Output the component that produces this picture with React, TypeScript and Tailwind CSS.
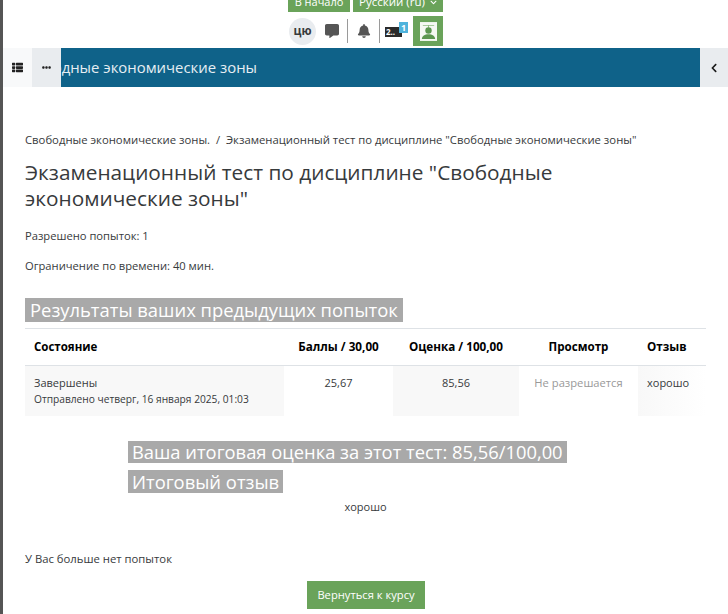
import { FaBell, FaCommentAlt, FaChevronLeft, FaChevronDown, FaThList, FaEllipsisH } from "react-icons/fa";

const font = { fontFamily: '"Open Sans", "Noto Sans", sans-serif' };

function Avatar() {
  return (
    <div className="flex h-[30px] w-[30px] items-center justify-center bg-[#6aa35a]">
      <svg viewBox="0 0 18 20" width="17" height="19">
        <rect width="18" height="20" fill="#f5f8f3" />
        <path d="M3 3h12v1H9.5v2h-1V4H3z" fill="#8fbb82" />
        <circle cx="9" cy="9" r="3.4" fill="#5c9650" />
        <path d="M2 18c0-3 3-5 7-5s7 2 7 5z" fill="#5c9650" />
      </svg>
    </div>
  );
}

function ResultsTable() {
  return (
    <div className="grid grid-cols-[259px_109px_126px_119px_68px] border-t border-[#dee2e6] text-[11px] text-[#373a3c]">
      <div className="flex h-[37px] items-center border-b border-[#dee2e6] pl-[9px] text-[11.5px] font-bold text-black">Состояние</div>
      <div className="flex h-[37px] items-center justify-center border-b border-[#dee2e6] text-[11.7px] font-bold text-black">Баллы / 30,00</div>
      <div className="flex h-[37px] items-center justify-center border-b border-[#dee2e6] text-[11.7px] font-bold text-black">Оценка / 100,00</div>
      <div className="flex h-[37px] items-center justify-center border-b border-[#dee2e6] text-[11.6px] font-bold text-black">Просмотр</div>
      <div className="flex h-[37px] items-center border-b border-[#dee2e6] pl-[9px] text-[11.7px] font-bold text-black">Отзыв</div>

      <div className="h-[50px] bg-[#f8f8f8] pl-[9px] pt-[9px] leading-[16px]">
        <div>Завершены</div>
        <div className="text-[10.2px]">Отправлено четверг, 16 января 2025, 01:03</div>
      </div>
      <div className="h-[50px] pt-[9px] text-center leading-[16px]">25,67</div>
      <div className="h-[50px] bg-[#f8f8f8] pt-[9px] text-center leading-[16px]">85,56</div>
      <div className="h-[50px] pt-[9px] text-center text-[11.2px] leading-[16px] text-[#999]">Не разрешается</div>
      <div className="h-[50px] bg-gradient-to-r from-[#f8f8f8] to-white pl-[9px] pt-[9px] leading-[16px]">хорошо</div>
    </div>
  );
}

export default function App() {
  return (
    <div style={font} className="h-[614px] w-[728px] overflow-hidden border-l-[3px] border-[#555] bg-white text-[#373a3c]">
      <header className="flex flex-col items-center">
        <div className="flex h-[12px] items-end gap-[3px] overflow-hidden text-[11px] text-white">
          <div className="flex h-[20px] w-[62px] shrink-0 items-center justify-center bg-[#6aa35a]">В начало</div>
          <div className="flex h-[20px] w-[90px] shrink-0 items-center justify-center gap-[5px] bg-[#6aa35a] text-[11.5px]">
            Русский ‎(ru)‎ <FaChevronDown className="text-[7px]" />
          </div>
        </div>
        <div className="ml-[1px] mt-[4px] flex h-[30px] items-center">
          <div className="flex h-[27px] w-[27px] items-center justify-center rounded-full bg-[#e9ecef] text-[11.5px] font-bold">цю</div>
          <div className="flex w-[31px] justify-center text-[#555]">
            <FaCommentAlt className="text-[14px]" />
          </div>
          <div className="h-[24px] w-px bg-[#9a9a9a]" />
          <div className="flex w-[31px] justify-center text-[#555]">
            <FaBell className="text-[14px]" />
          </div>
          <div className="h-[24px] w-px bg-[#9a9a9a]" />
          <div className="relative ml-[5px] mr-[11px] mt-[2px] flex h-[10px] w-[17px] items-center bg-[#2b2b2b] pl-[1px] text-[8px] font-bold leading-none text-white">
            2..
            <span className="absolute -right-[6px] -top-[5px] flex h-[11px] w-[9px] items-center justify-center bg-[#4fb3dc] text-[9px] font-bold">1</span>
          </div>
          <Avatar />
        </div>
      </header>

      <nav className="mt-[2px] flex h-[39px] items-stretch">
        <div className="flex w-[29px] items-center justify-center bg-[#f8f9fa] text-[11px] text-[#222]">
          <FaThList />
        </div>
        <div className="flex w-[29px] items-center justify-center bg-[#e9ecef] text-[9px] text-[#222]">
          <FaEllipsisH />
        </div>
        <div className="flex flex-1 items-center justify-end overflow-hidden whitespace-nowrap bg-[#0f6289] pr-[443px] text-[14.9px] text-[#e6eef3]">
          Свободные экономические зоны
        </div>
        <div className="flex w-[28px] items-center justify-center bg-[#e9ecef] text-[10px] text-[#1a1a1a]">
          <FaChevronLeft />
        </div>
      </nav>

      <main className="w-[703px] pl-[22px]">
        <p className="mt-[45px] text-[11.3px] leading-[16px]">
          Свободные экономические зоны.&nbsp; /&nbsp; Экзаменационный тест по дисциплине "Свободные экономические зоны"
        </p>
        <h2 className="mt-[11px] w-[600px] text-[20.8px] leading-[26px]">
          Экзаменационный тест по дисциплине "Свободные экономические зоны"
        </h2>
        <p className="mt-[17px] text-[11.2px] leading-[16px]">Разрешено попыток: 1</p>
        <p className="mt-[14px] text-[11.2px] leading-[16px]">Ограничение по времени: 40 мин.</p>

        <h3 className="mt-[24px] h-[24px] w-fit bg-[#a9a9a9] px-[5px] text-[18.4px] leading-[24px] text-white">
          Результаты ваших предыдущих попыток
        </h3>
        <div className="mt-[6px]">
          <ResultsTable />
        </div>

        <div className="pl-[103px]">
          <h3 className="mt-[25px] h-[22px] w-fit bg-[#a9a9a9] px-[4px] text-[18.35px] leading-[22px] text-white">
            Ваша итоговая оценка за этот тест: 85,56/100,00
          </h3>
          <h3 className="mt-[7px] h-[23px] w-fit bg-[#a9a9a9] px-[4px] text-[18.4px] leading-[23px] text-white">
            Итоговый отзыв
          </h3>
        </div>
        <p className="mt-[6px] w-[681px] text-center text-[11px] leading-[16px]">хорошо</p>

        <p className="mt-[36px] text-[11.3px] leading-[16px]">У Вас больше нет попыток</p>
        <div className="mt-[14px] flex w-[682px] justify-center">
          <button className="h-[28px] w-[118px] bg-[#6aa35a] text-[11.2px] text-white">Вернуться к курсу</button>
        </div>
      </main>
    </div>
  );
}
